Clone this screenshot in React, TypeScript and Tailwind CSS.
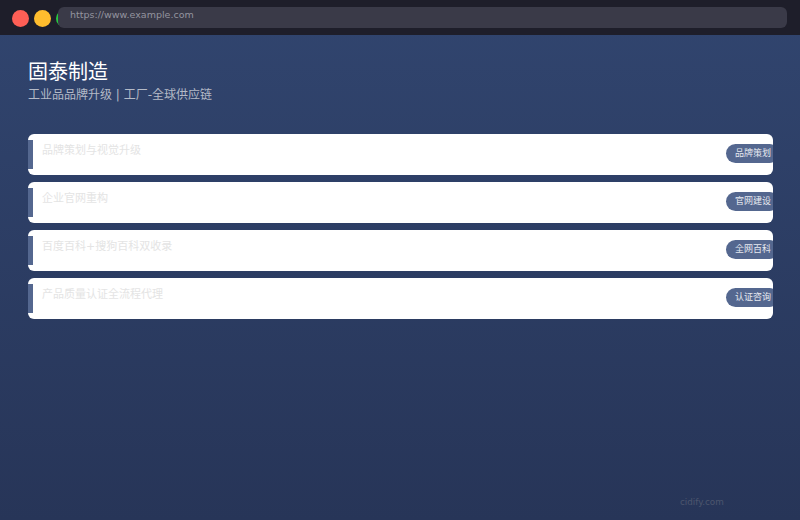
const items = [
  { title: '品牌策划与视觉升级', tag: '品牌策划' },
  { title: '企业官网重构', tag: '官网建设' },
  { title: '百度百科+搜狗百科双收录', tag: '全网百科' },
  { title: '产品质量认证全流程代理', tag: '认证咨询' },
]

export default function App() {
  return (
    <div className="font-['DejaVu_Sans','Noto_Sans_CJK_JP',sans-serif] h-[520px] w-[800px] overflow-hidden bg-gradient-to-b from-[#31456f] to-[#273558]">
      {/* Browser bar */}
      <div className="flex h-[35px] items-start bg-[#1e1e2a] pt-[7px]">
        <div className="flex shrink-0 gap-[5px] pl-3 pt-[3px]">
          <span className="h-[17px] w-[17px] rounded-full bg-[#ff5f56]" />
          <span className="h-[17px] w-[17px] rounded-full bg-[#ffbd2e]" />
          <span className="h-[17px] w-[17px] rounded-full bg-[#27c93f]" />
        </div>
        <div className="-ml-[15px] flex h-[21px] w-[729px] items-center rounded-md bg-[#3a3a48] pb-[4px] pl-3 text-[9.5px] text-[#94949f]">
          https://www.example.com
        </div>
      </div>

      {/* Heading */}
      <div className="px-7 pt-[25px]">
        <h1 className="text-[20px] leading-[24px] text-white">固泰制造</h1>
        <p className="mt-[3px] text-[12px] leading-[16px] text-[#b4bac7]">工业品品牌升级 | 工厂-全球供应链</p>
      </div>

      {/* Service cards */}
      <div className="mt-[31px] ml-7 flex w-[745px] flex-col gap-[7px]">
        {items.map((item) => (
          <div key={item.title} className="flex h-[41px] overflow-hidden rounded-md bg-white pt-[6px]">
            <div className="h-[29px] w-[5px] shrink-0 bg-[#54678f]" />
            <p className="ml-[9px] flex-1 pt-[2px] text-[11px] leading-[18px] text-[#e4e4e4]">{item.title}</p>
            <span className="mr-[-6px] mt-[4px] flex h-[19px] w-[53px] shrink-0 items-center rounded-[10px] bg-[#54678f] pl-[9px] text-[9px] text-[#e6e9f0]">
              {item.tag}
            </span>
          </div>
        ))}
      </div>

      <div className="mt-[177px] pl-[680px] text-[8.8px] leading-[12px] text-[#4d566e]">cidify.com</div>
    </div>
  )
}
